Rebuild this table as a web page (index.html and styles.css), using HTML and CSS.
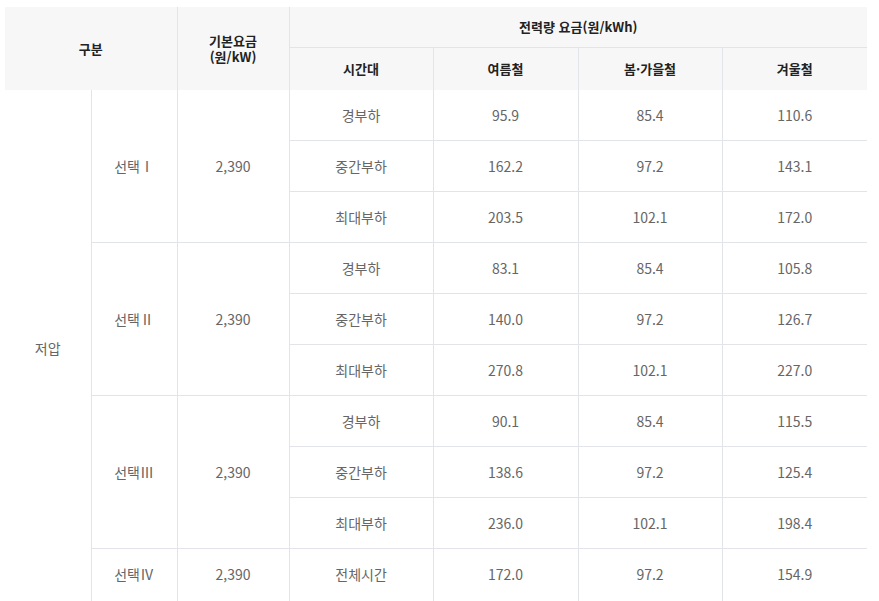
FILE: index.html
```html
<!DOCTYPE html>
<html lang="ko">
<head>
<meta charset="utf-8">
<title>전력량 요금</title>
<link rel="stylesheet" href="styles.css">
</head>
<body>
<div class="wrap">
<table class="rate">
  <colgroup>
    <col class="c1"><col class="c2"><col class="c3"><col class="c4"><col class="c5"><col class="c6"><col class="c7">
  </colgroup>
  <thead>
    <tr class="h1">
      <th colspan="2" rowspan="2" class="first">구분</th>
      <th rowspan="2">기본요금<br>(원/kW)</th>
      <th colspan="4" class="last">전력량 요금(원/kWh)</th>
    </tr>
    <tr class="h2">
      <th>시간대</th>
      <th>여름철</th>
      <th>봄·가을철</th>
      <th class="last">겨울철</th>
    </tr>
  </thead>
  <tbody>
    <tr>
      <td rowspan="10" class="first">저압</td>
      <td rowspan="3">선택Ⅰ</td>
      <td rowspan="3">2,390</td>
      <td>경부하</td><td>95.9</td><td>85.4</td><td class="last">110.6</td>
    </tr>
    <tr><td>중간부하</td><td>162.2</td><td>97.2</td><td class="last">143.1</td></tr>
    <tr><td>최대부하</td><td>203.5</td><td>102.1</td><td class="last">172.0</td></tr>
    <tr>
      <td rowspan="3">선택Ⅱ</td>
      <td rowspan="3">2,390</td>
      <td>경부하</td><td>83.1</td><td>85.4</td><td class="last">105.8</td>
    </tr>
    <tr><td>중간부하</td><td>140.0</td><td>97.2</td><td class="last">126.7</td></tr>
    <tr><td>최대부하</td><td>270.8</td><td>102.1</td><td class="last">227.0</td></tr>
    <tr>
      <td rowspan="3">선택Ⅲ</td>
      <td rowspan="3">2,390</td>
      <td>경부하</td><td>90.1</td><td>85.4</td><td class="last">115.5</td>
    </tr>
    <tr><td>중간부하</td><td>138.6</td><td>97.2</td><td class="last">125.4</td></tr>
    <tr><td>최대부하</td><td>236.0</td><td>102.1</td><td class="last">198.4</td></tr>
    <tr class="end">
      <td>선택Ⅳ</td>
      <td>2,390</td>
      <td>전체시간</td><td>172.0</td><td>97.2</td><td class="last">154.9</td>
    </tr>
  </tbody>
</table>
</div>
</body>
</html>
```

FILE: styles.css
```css
html, body {
  margin: 0;
  padding: 0;
  background: #fff;
}

.wrap {
  padding: 7px 0 20px 5px;
}

.rate {
  width: 862px;
  table-layout: fixed;
  border-collapse: collapse;
  font-family: "Noto Sans CJK KR", "Noto Sans", sans-serif;
  text-align: center;
}

.c1 { width: 86px; }
.c2 { width: 86px; }
.c3 { width: 112px; }
.c4 { width: 144px; }
.c5 { width: 145px; }
.c6 { width: 144px; }
.c7 { width: 145px; }

.rate th,
.rate td {
  padding: 0;
  border: 1px solid #e2e4ea;
  vertical-align: middle;
}

.rate th {
  background: #f7f7f7;
  color: #222;
  font-size: 13px;
  font-weight: 700;
  line-height: 16px;
  border-top: none;
}

.rate .h1 th { height: 40px; }
.rate .h2 th { height: 42px; border-bottom: none; }
.rate thead .h1 th[rowspan] { border-bottom: none; }

.rate td {
  height: 50px;
  color: #666;
  font-size: 14px;
  line-height: 20px;
}

.rate tbody tr:first-child td { border-top: none; }
.rate tbody .end td { padding-bottom: 6px; }

.rate .first { border-left: none; }
.rate .last { border-right: none; }
```
